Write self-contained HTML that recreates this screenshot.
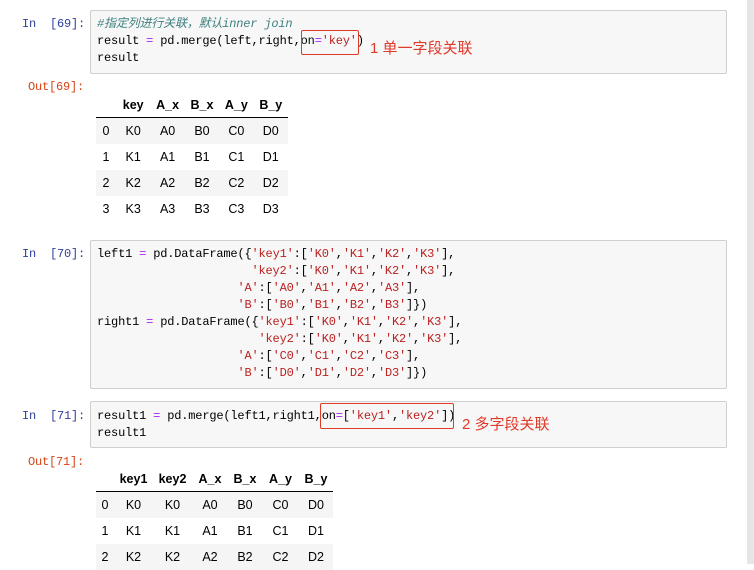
<!DOCTYPE html>
<html><head><meta charset="utf-8"><style>
body{margin:0;width:754px;height:564px;background:#fff;position:relative;overflow:hidden;font-family:"Liberation Sans",sans-serif}
.sb{position:absolute;left:747px;top:0;width:7px;height:564px;background:#e6e6e6}
.box{position:absolute;left:90px;width:635px;background:#f7f7f7;border:1px solid #cfcfcf;border-radius:2px}
.p{position:absolute;font-family:"Liberation Mono",monospace;font-size:12px;color:#303f9f;white-space:pre;letter-spacing:-0.2px}
.o{color:#d84315}
.c{position:absolute;left:97px;font-family:"Liberation Mono",monospace;font-size:12px;color:#000;white-space:pre;letter-spacing:-0.18px;line-height:17px}
.s{color:#ba2121}.op{color:#aa22ff}.cm{color:#408080;font-style:italic}
.rb{position:absolute;border:1px solid #e03a2a;border-radius:2px}
.ann{position:absolute;color:#e03a2a;font-size:15px;font-family:"Liberation Sans","Noto Sans CJK SC",sans-serif;white-space:nowrap}
table{position:absolute;border-collapse:collapse;font-size:12.5px;color:#000;table-layout:fixed}
th{font-weight:bold;height:25px;padding:0;text-align:center;border-bottom:1px solid #000}
td{height:26px;padding:0;text-align:center}
tr.g td{background:#f5f5f5}
</style></head><body>
<div class="sb"></div>

<div class="box" style="top:10px;height:62px"></div>
<div class="p" style="left:22px;top:17px">In  [69]:</div>
<div class="c" style="top:16px"><span class="cm">#指定列进行关联，默认inner join</span>
result <span class="op">=</span> pd.merge(left,right,on<span class="op">=</span><span class="s">'key'</span>)
result</div>
<div class="rb" style="left:301px;top:30px;width:56px;height:23px"></div>
<div class="ann" style="left:370px;top:37px">1 单一字段关联</div>

<div class="p o" style="left:28px;top:80px">Out[69]:</div>
<table style="left:96px;top:92px;width:192px">
<colgroup><col style="width:20px"><col style="width:34.4px"><col style="width:34.4px"><col style="width:34.4px"><col style="width:34.4px"><col style="width:34.4px"></colgroup>
<tr><th></th><th>key</th><th>A_x</th><th>B_x</th><th>A_y</th><th>B_y</th></tr>
<tr class="g"><td>0</td><td>K0</td><td>A0</td><td>B0</td><td>C0</td><td>D0</td></tr>
<tr><td>1</td><td>K1</td><td>A1</td><td>B1</td><td>C1</td><td>D1</td></tr>
<tr class="g"><td>2</td><td>K2</td><td>A2</td><td>B2</td><td>C2</td><td>D2</td></tr>
<tr><td>3</td><td>K3</td><td>A3</td><td>B3</td><td>C3</td><td>D3</td></tr>
</table>

<div class="box" style="top:240px;height:147px"></div>
<div class="p" style="left:22px;top:247px">In  [70]:</div>
<div class="c" style="top:246px">left1 <span class="op">=</span> pd.DataFrame({<span class="s">'key1'</span>:[<span class="s">'K0'</span>,<span class="s">'K1'</span>,<span class="s">'K2'</span>,<span class="s">'K3'</span>],
                      <span class="s">'key2'</span>:[<span class="s">'K0'</span>,<span class="s">'K1'</span>,<span class="s">'K2'</span>,<span class="s">'K3'</span>],
                    <span class="s">'A'</span>:[<span class="s">'A0'</span>,<span class="s">'A1'</span>,<span class="s">'A2'</span>,<span class="s">'A3'</span>],
                    <span class="s">'B'</span>:[<span class="s">'B0'</span>,<span class="s">'B1'</span>,<span class="s">'B2'</span>,<span class="s">'B3'</span>]})
right1 <span class="op">=</span> pd.DataFrame({<span class="s">'key1'</span>:[<span class="s">'K0'</span>,<span class="s">'K1'</span>,<span class="s">'K2'</span>,<span class="s">'K3'</span>],
                       <span class="s">'key2'</span>:[<span class="s">'K0'</span>,<span class="s">'K1'</span>,<span class="s">'K2'</span>,<span class="s">'K3'</span>],
                    <span class="s">'A'</span>:[<span class="s">'C0'</span>,<span class="s">'C1'</span>,<span class="s">'C2'</span>,<span class="s">'C3'</span>],
                    <span class="s">'B'</span>:[<span class="s">'D0'</span>,<span class="s">'D1'</span>,<span class="s">'D2'</span>,<span class="s">'D3'</span>]})</div>

<div class="box" style="top:401px;height:45px"></div>
<div class="p" style="left:22px;top:409px">In  [71]:</div>
<div class="c" style="top:408px">result1 <span class="op">=</span> pd.merge(left1,right1,on<span class="op">=</span>[<span class="s">'key1'</span>,<span class="s">'key2'</span>])
result1</div>
<div class="rb" style="left:320px;top:403px;width:132px;height:24px"></div>
<div class="ann" style="left:462px;top:413px">2 多字段关联</div>

<div class="p o" style="left:28px;top:455px">Out[71]:</div>
<table style="left:96px;top:466px;width:237px">
<colgroup><col style="width:18px"><col style="width:39px"><col style="width:39px"><col style="width:36px"><col style="width:34px"><col style="width:37px"><col style="width:34px"></colgroup>
<tr><th></th><th>key1</th><th>key2</th><th>A_x</th><th>B_x</th><th>A_y</th><th>B_y</th></tr>
<tr class="g"><td>0</td><td>K0</td><td>K0</td><td>A0</td><td>B0</td><td>C0</td><td>D0</td></tr>
<tr><td>1</td><td>K1</td><td>K1</td><td>A1</td><td>B1</td><td>C1</td><td>D1</td></tr>
<tr class="g"><td>2</td><td>K2</td><td>K2</td><td>A2</td><td>B2</td><td>C2</td><td>D2</td></tr>
</table>
</body></html>
